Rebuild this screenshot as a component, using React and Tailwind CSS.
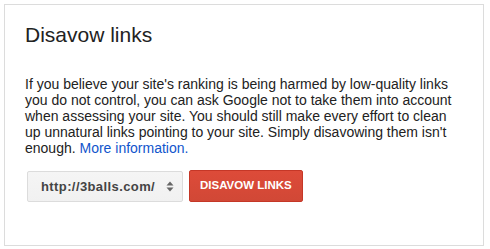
export default function App() {
  return (
    <div className="w-[490px] h-[249px] bg-white pt-[4px] pl-[4px]" style={{ fontFamily: '"Liberation Sans", Arial, sans-serif' }}>
      <div className="w-[480px] h-[242px] border border-[#dcdcdc] pl-[20px] pt-[18px]">
        <h1 className="text-[21px] leading-[24px] text-[#222]">Disavow links</h1>

        <p className="mt-[29px] w-[440px] text-[14px] leading-[16px] text-[#222]">
          If you believe your site's ranking is being harmed by low-quality links you do not control, you can ask Google not to take them into account when assessing your site. You should still make every effort to clean up unnatural links pointing to your site. Simply disavowing them isn't enough.{' '}
          <a className="text-[#1155cc]">More information.</a>
        </p>

        <div className="mt-[14px] ml-[2px] flex items-start gap-[6px]">
          {/* site picker */}
          <div className="mt-[1px] w-[156px] h-[31px] flex items-center justify-between pl-[13px] pr-[8px] rounded-[2px] border border-[#dcdcdc] bg-gradient-to-b from-[#f5f5f5] to-[#f1f1f1]">
            <span className="text-[13px] font-bold tracking-[0.4px] text-[#444]">http://3balls.com/</span>
            <svg width="8" height="11" viewBox="0 0 8 11" className="text-[#666]">
              <path d="M4 0.5 L7.5 4.5 H0.5 Z" fill="currentColor" />
              <path d="M4 10.5 L7.5 6.5 H0.5 Z" fill="currentColor" />
            </svg>
          </div>
          <button className="h-[32px] px-[10px] rounded-[2px] border border-[#c53727] bg-gradient-to-b from-[#dd4b39] to-[#d14836] text-white text-[11.5px] font-bold">
            DISAVOW LINKS
          </button>
        </div>
      </div>
    </div>
  );
}
